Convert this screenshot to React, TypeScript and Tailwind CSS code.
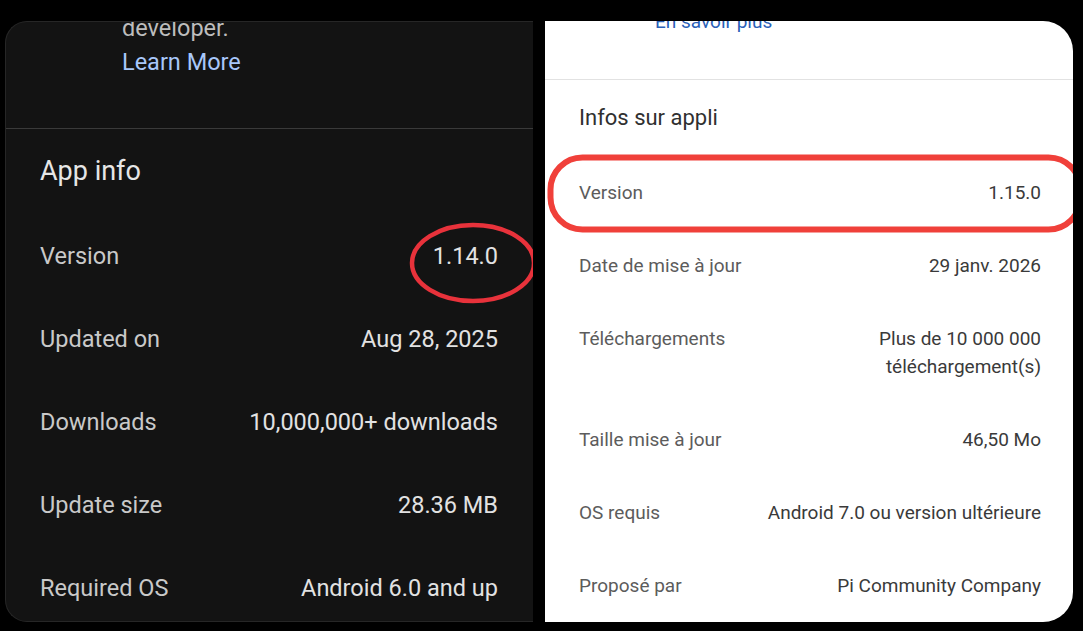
import React from "react";

const leftRows: [string, string][] = [
  ["Version", "1.14.0"],
  ["Updated on", "Aug 28, 2025"],
  ["Downloads", "10,000,000+ downloads"],
  ["Update size", "28.36 MB"],
  ["Required OS", "Android 6.0 and up"],
];

const rightRows: [string, string[]][] = [
  ["Version", ["1.15.0"]],
  ["Date de mise à jour", ["29 janv. 2026"]],
  ["Téléchargements", ["Plus de 10 000 000", "téléchargement(s)"]],
  ["Taille mise à jour", ["46,50 Mo"]],
  ["OS requis", ["Android 7.0 ou version ultérieure"]],
  ["Proposé par", ["Pi Community Company"]],
];

export default function App() {
  return (
    <div
      className="w-[1083px] h-[631px] bg-black flex gap-[12px] pl-[5px] pt-[21px] overflow-hidden"
      style={{ fontFamily: "Roboto, 'Noto Sans', sans-serif" }}
    >
      {/* Left dark panel */}
      <div className="relative w-[528px] h-[601px] bg-[#131313] rounded-l-[22px] border border-r-0 border-[#262626] overflow-hidden">
        <div className="flex flex-col">
          <div className="mt-[-8px] pl-[116px] text-[23.5px] leading-[28px] text-[#bdbdbd]">developer.</div>
          <div className="mt-[6px] pl-[116px] text-[23.5px] leading-[28px] text-[#a8c7fa]">Learn More</div>
          <div className="mt-[52px] h-px bg-[#3a3a3a]" />
          <div className="mt-[26px] pl-[34px] text-[27px] leading-[32px] text-[#e6e6e6]">App info</div>
          <div className="mt-[28px] flex flex-col">
            {leftRows.map(([k, v]) => (
              <div key={k} className="h-[83px] flex items-center justify-between pl-[34px] pr-[35px] text-[23.5px]">
                <span className="text-[#c9c9c9]">{k}</span>
                <span className="text-[#e2e2e2]">{v}</span>
              </div>
            ))}
          </div>
        </div>
        <svg className="absolute left-[401px] top-[199px]" width="132" height="86" viewBox="0 0 132 86">
          <ellipse cx="66" cy="42" rx="61" ry="38" fill="none" stroke="#e8323b" strokeWidth="4.5" />
        </svg>
      </div>

      {/* Right light panel */}
      <div className="relative w-[528px] h-[601px] bg-white rounded-r-[30px] overflow-hidden">
        <div className="flex flex-col">
          <div className="mt-[-11px] pl-[110px] text-[19px] leading-[24px] text-[#2a5fb8]">En savoir plus</div>
          <div className="mt-[45px] h-px bg-[#e2e2e2]" />
          <div className="mt-[24px] pl-[34px] text-[22px] leading-[28px] text-[#303030]">Infos sur appli</div>
          <div className="mt-[47px] flex flex-col gap-[45px]">
            {rightRows.map(([k, v]) => (
              <div key={k} className="flex items-start justify-between pl-[34px] pr-[32px] text-[19px] leading-[28px]">
                <span className="text-[#5c5c5c]">{k}</span>
                <div className="flex flex-col items-end text-right text-[#3a3a3a]">
                  {v.map((line) => (
                    <span key={line}>{line}</span>
                  ))}
                </div>
              </div>
            ))}
          </div>
        </div>
        <svg className="absolute left-0 top-[133px]" width="532" height="80" viewBox="0 0 532 80">
          <rect x="5.5" y="3.5" width="530" height="72" rx="32" ry="32" fill="none" stroke="#f0403a" strokeWidth="6" />
        </svg>
      </div>
    </div>
  );
}
